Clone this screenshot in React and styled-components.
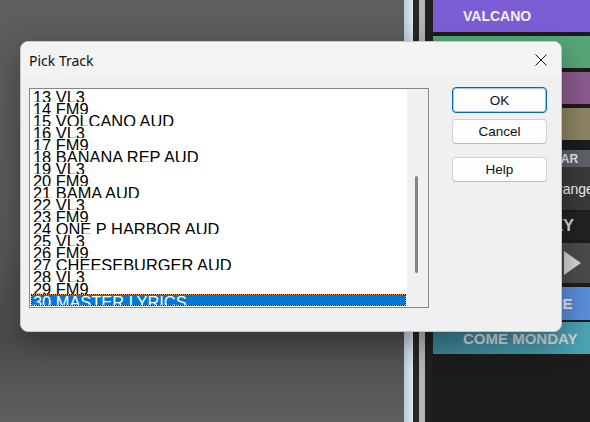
import React from "react";
import styled, { createGlobalStyle } from "styled-components";

const Global = createGlobalStyle`
  html, body { margin: 0; padding: 0; background: #5c5c5c; }
  body { width: 590px; height: 422px; overflow: hidden; }
`;

const Screen = styled.div`
  position: relative;
  width: 590px;
  height: 422px;
  display: flex;
  overflow: hidden;
  font-family: "Liberation Sans", Arial, sans-serif;
`;

const Desktop = styled.div`
  flex: 1;
  background: linear-gradient(180deg, #5e5e5e 0%, #585858 55%, #4c4c4c 80%, #5f5f5f 100%);
`;

const Rail = styled.div`
  display: flex;
  width: 29px;
`;

const Stripe = styled.div`
  width: ${(p) => p.$w}px;
  background: ${(p) => p.$c};
`;

const SetList = styled.div`
  width: 157px;
  background: #1c1c1c;
  display: flex;
  flex-direction: column;
`;

const SongButton = styled.div`
  flex: none;
  height: ${(p) => p.$h}px;
  margin-top: ${(p) => p.$mt || 0}px;
  box-sizing: border-box;
  background: ${(p) => p.$bg};
  color: ${(p) => p.$fg || "#f2f2f2"};
  display: flex;
  align-items: center;
  padding-left: 30px;
  font-size: ${(p) => p.$fs || 14}px;
  font-weight: 700;
  white-space: nowrap;
  overflow: hidden;
`;

const InfoRow = styled.div`
  flex: none;
  height: ${(p) => p.$h}px;
  margin-top: ${(p) => p.$mt || 0}px;
  background: ${(p) => p.$bg};
  color: ${(p) => p.$fg};
  display: flex;
  align-items: center;
  padding-left: ${(p) => p.$pl}px;
  font-size: ${(p) => p.$fs}px;
  font-weight: ${(p) => p.$fw || 400};
  white-space: nowrap;
  overflow: hidden;
`;

const Transport = styled.div`
  flex: none;
  height: 40px;
  margin-top: 3px;
  background: #262626;
  display: flex;
  justify-content: flex-end;
`;

const PlayBox = styled.div`
  width: 26px;
  background: #4b4b4b;
  display: flex;
  align-items: center;
  padding-left: 3px;
  border-left: 2px solid #333;
`;

/* ---------- dialog ---------- */

const Dialog = styled.div`
  position: absolute;
  left: 20px;
  top: 41px;
  width: 542px;
  height: 291px;
  box-sizing: border-box;
  border: 1px solid #c6c6c6;
  border-radius: 8px;
  background: #f0f0f0;
  overflow: hidden;
  box-shadow: 0 10px 30px rgba(0, 0, 0, 0.35);
  display: flex;
  flex-direction: column;
`;

const TitleBar = styled.div`
  flex: none;
  height: 36px;
  background: #f3f3f3;
  display: flex;
  align-items: center;
  justify-content: space-between;
  padding-left: 8px;
  font-family: "Noto Sans", "Open Sans", sans-serif;
  font-size: 14px;
  color: #111;
`;

const CloseButton = styled.div`
  width: 40px;
  height: 36px;
  display: flex;
  align-items: center;
  justify-content: center;
`;

const Body = styled.div`
  display: flex;
  align-items: flex-start;
  padding: 9px 14px 0 8px;
`;

const ListBox = styled.div`
  margin-top: 1px;
  width: 400px;
  height: 220px;
  box-sizing: border-box;
  border: 1px solid #828790;
  background: #fff;
  display: flex;
`;

const Items = styled.div`
  flex: 1;
  padding: 1px;
  overflow: hidden;
`;

const Item = styled.div`
  height: 12px;
  box-sizing: border-box;
  padding: ${(p) => (p.$selected ? "2px" : "1px")} 0 0 2px;
  line-height: 12px;
  font-size: 16.4px;
  white-space: nowrap;
  overflow: hidden;
  color: ${(p) => (p.$selected ? "#ffffff" : "#000000")};
  background: ${(p) => (p.$selected ? "#0078d7" : "transparent")};
  outline: ${(p) => (p.$selected ? "1px dotted #111" : "none")};
  outline-offset: -1px;
  box-shadow: ${(p) => (p.$selected ? "inset 0 0 0 1px #f0a040" : "none")};
`;

const ScrollTrack = styled.div`
  width: 21px;
  background: #f0f0f0;
  display: flex;
  flex-direction: column;
  align-items: flex-start;
  padding-left: 8px;
  box-sizing: border-box;
`;

const Thumb = styled.div`
  margin-top: 87px;
  width: 3px;
  height: 97px;
  border-radius: 2px;
  background: #858585;
`;

const Buttons = styled.div`
  margin-left: 23px;
  width: 95px;
  display: flex;
  flex-direction: column;
`;

const DlgButton = styled.div`
  height: ${(p) => p.$h}px;
  margin-top: ${(p) => p.$mt || 0}px;
  box-sizing: border-box;
  border: 1px solid ${(p) => (p.$default ? "#0067c0" : "#d0d0d0")};
  border-bottom-color: ${(p) => (p.$default ? "#0067c0" : "#bdbdbd")};
  box-shadow: ${(p) => (p.$default ? "inset 0 0 0 1px rgba(0,103,192,0.35)" : "none")};
  border-radius: 4px;
  background: #fdfdfd;
  display: flex;
  align-items: center;
  justify-content: center;
  font-size: 13.5px;
  color: #111;
`;

const tracks = [
  "13 VL3",
  "14 FM9",
  "15 VOLCANO AUD",
  "16 VL3",
  "17 FM9",
  "18 BANANA REP AUD",
  "19 VL3",
  "20 FM9",
  "21 BAMA AUD",
  "22 VL3",
  "23 FM9",
  "24 ONE P HARBOR AUD",
  "25 VL3",
  "26 FM9",
  "27 CHEESEBURGER AUD",
  "28 VL3",
  "29 FM9",
  "30 MASTER LYRICS",
];

export default function App() {
  return (
    <>
      <Global />
      <Screen>
        <Desktop />
        <Rail>
          <Stripe $w={9} $c="linear-gradient(90deg,#b9c9da,#dbe6f1)" />
          <Stripe $w={6} $c="#262626" />
          <Stripe $w={6} $c="#b4b4b4" />
          <Stripe $w={8} $c="#202020" />
        </Rail>
        <SetList>
          <SongButton $h={32} $bg="#7d5dd6">VALCANO</SongButton>
          <SongButton $h={32} $mt={4} $bg="#57a679" />
          <SongButton $h={32} $mt={4} $bg="#8a5a8c" />
          <SongButton $h={32} $mt={4} $bg="#8c8462" />
          <InfoRow $h={17} $mt={10} $bg="#5b6169" $fg="#e4e4e4" $pl={100} $fs={12} $fw={700}>
            GUITAR
          </InfoRow>
          <InfoRow $h={43} $bg="#3a3a3a" $fg="#f0f0f0" $pl={111} $fs={14}>
            Arrangement
          </InfoRow>
          <InfoRow $h={28} $mt={2} $bg="#222222" $fg="#d8d8d8" $pl={108} $fs={16} $fw={700}>
            KEY
          </InfoRow>
          <Transport>
            <PlayBox>
              <svg width="17" height="24" viewBox="0 0 17 24">
                <polygon points="0,0 17,12 0,24" fill="#d4d4d4" />
              </svg>
            </PlayBox>
          </Transport>
          <SongButton $h={33} $mt={4} $fs={15} $bg="linear-gradient(90deg,#4574c4,#5b8fdc)" $fg="#e8e8e8">
            BAMA BREEZE
          </SongButton>
          <SongButton $h={32} $mt={2} $fs={15} $bg="linear-gradient(90deg,#3a7f92,#4aa3b4)" $fg="#d2d6d8">
            COME MONDAY
          </SongButton>
        </SetList>

        <Dialog>
          <TitleBar>
            <span>Pick Track</span>
            <CloseButton>
              <svg width="12" height="12" viewBox="0 0 12 12">
                <path d="M0.5 0.5 L11.5 11.5 M11.5 0.5 L0.5 11.5" stroke="#111" strokeWidth="1" />
              </svg>
            </CloseButton>
          </TitleBar>
          <Body>
            <ListBox>
              <Items>
                {tracks.map((t, i) => (
                  <Item key={t} $selected={i === tracks.length - 1}>
                    {t}
                  </Item>
                ))}
              </Items>
              <ScrollTrack>
                <Thumb />
              </ScrollTrack>
            </ListBox>
            <Buttons>
              <DlgButton $h={26} $default>OK</DlgButton>
              <DlgButton $h={25} $mt={6}>Cancel</DlgButton>
              <DlgButton $h={25} $mt={13}>Help</DlgButton>
            </Buttons>
          </Body>
        </Dialog>
      </Screen>
    </>
  );
}
